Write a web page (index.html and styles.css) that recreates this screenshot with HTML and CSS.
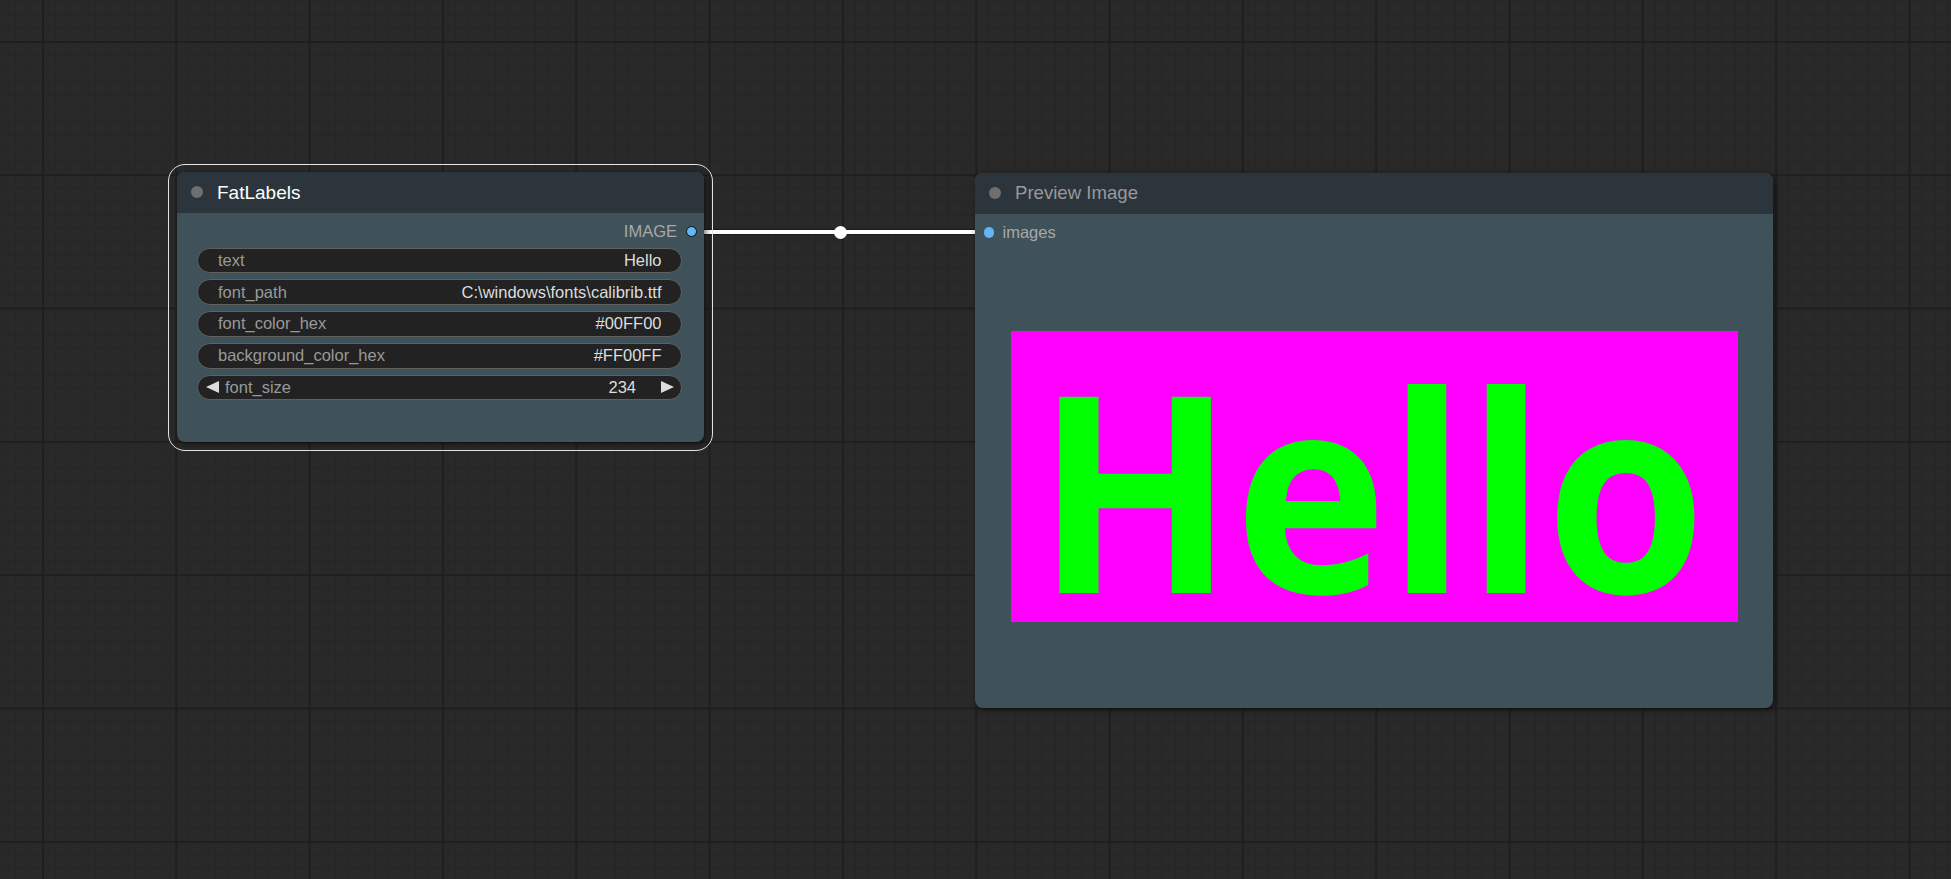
FILE: index.html
```html
<!DOCTYPE html>
<html lang="en">
<head>
<meta charset="utf-8">
<title>ComfyUI - FatLabels</title>
<link rel="stylesheet" href="styles.css">
</head>
<body>
<div class="canvas">
  <div class="link"></div>
  <div class="link-mid"></div>

  <div class="node node-fat selected">
    <div class="node-title">
      <span class="title-dot"></span>
      <span class="title-text title-active">FatLabels</span>
    </div>
    <div class="node-body">
      <div class="slot-row slot-out">
        <span class="slot-label">IMAGE</span>
        <span class="slot-dot slot-dot-out"></span>
      </div>
      <div class="widgets">
        <div class="widget">
          <span class="w-label">text</span>
          <span class="w-value">Hello</span>
        </div>
        <div class="widget">
          <span class="w-label">font_path</span>
          <span class="w-value">C:\windows\fonts\calibrib.ttf</span>
        </div>
        <div class="widget">
          <span class="w-label">font_color_hex</span>
          <span class="w-value">#00FF00</span>
        </div>
        <div class="widget">
          <span class="w-label">background_color_hex</span>
          <span class="w-value">#FF00FF</span>
        </div>
        <div class="widget widget-num">
          <svg class="arrow" width="13" height="12" viewBox="0 0 13 12"><polygon points="0,6 13,0 13,12" /></svg>
          <span class="w-label">font_size</span>
          <span class="w-value">234</span>
          <svg class="arrow" width="13" height="12" viewBox="0 0 13 12"><polygon points="13,6 0,0 0,12" /></svg>
        </div>
      </div>
    </div>
  </div>

  <div class="node node-preview">
    <div class="node-title">
      <span class="title-dot"></span>
      <span class="title-text">Preview Image</span>
    </div>
    <div class="node-body">
      <div class="slot-row slot-in">
        <span class="slot-dot"></span>
        <span class="slot-label">images</span>
      </div>
      <div class="preview-area">
        <svg class="preview-img" width="727" height="291" viewBox="0 0 727 291">
          <rect x="0" y="0" width="727" height="291" fill="#FF00FF"/>
          <text x="25" y="262" fill="#00FF00" font-family="'Open Sans', sans-serif" font-weight="700" font-size="275" textLength="670" lengthAdjust="spacingAndGlyphs">Hello</text>
        </svg>
      </div>
    </div>
  </div>
</div>
</body>
</html>
```

FILE: styles.css
```css
* { box-sizing: border-box; }

html, body {
  margin: 0;
  padding: 0;
  width: 1951px;
  height: 879px;
  overflow: hidden;
  font-family: "Liberation Sans", Arial, sans-serif;
}

.canvas {
  position: relative;
  width: 1951px;
  height: 879px;
  background-color: #292929;
  background-image:
    linear-gradient(to right, #1f1f1f 2px, transparent 2px),
    linear-gradient(to bottom, #1f1f1f 2px, transparent 2px),
    linear-gradient(to right, #252525 1px, transparent 1px),
    linear-gradient(to bottom, #252525 1px, transparent 1px);
  background-size:
    133.333px 133.333px,
    133.333px 133.333px,
    13.3333px 13.3333px,
    13.3333px 13.3333px;
  background-position:
    42px 41px,
    42px 41px,
    42px 41px,
    42px 41px;
}

/* link between nodes */
.link {
  position: absolute;
  left: 691px;
  top: 229.5px;
  width: 298px;
  height: 4.5px;
  background: #ffffff;
  box-shadow: 0 0 0 1px rgba(0, 0, 0, 0.35);
}

.link-mid {
  position: absolute;
  left: 833.5px;
  top: 225.5px;
  width: 13px;
  height: 13px;
  border-radius: 50%;
  background: #ffffff;
}

/* nodes */
.node {
  position: absolute;
  display: flex;
  flex-direction: column;
  background: #3f5259;
  border-radius: 8px;
  box-shadow: 2px 2px 6px rgba(0, 0, 0, 0.55);
}

.node-fat {
  left: 177px;
  top: 172px;
  width: 527px;
  height: 270px;
}

.node-preview {
  left: 975px;
  top: 173px;
  width: 798px;
  height: 535px;
}

.selected::before {
  content: "";
  position: absolute;
  left: -9px;
  top: -8px;
  right: -8.5px;
  bottom: -8.5px;
  border: 1.5px solid #e2e2e2;
  border-radius: 17px;
  pointer-events: none;
}

.node-title {
  height: 40.5px;
  flex: none;
  display: flex;
  align-items: center;
  gap: 14.5px;
  padding-left: 13.5px;
  background: #2b353b;
  border-radius: 8px 8px 0 0;
}

.title-dot {
  width: 12px;
  height: 12px;
  border-radius: 50%;
  background: #6f6f6f;
  flex: none;
}

.title-text {
  font-size: 18.6px;
  color: #999999;
  line-height: 1;
  white-space: nowrap;
}

.title-active {
  color: #ffffff;
  font-size: 19px;
}

.node-body {
  flex: 1;
  display: flex;
  flex-direction: column;
  padding-top: 6px;
}

.slot-row {
  height: 26px;
  display: flex;
  align-items: center;
  font-size: 16.5px;
  color: #a8a8a8;
}

.slot-out {
  justify-content: flex-end;
  gap: 8.5px;
  padding-right: 7.5px;
}

.slot-in {
  gap: 8.5px;
  padding-left: 8.5px;
}

.slot-dot {
  width: 10.5px;
  height: 10.5px;
  border-radius: 50%;
  background: #64b5f6;
  flex: none;
}

.slot-dot-out {
  width: 11px;
  height: 11px;
  border: 1px solid #101010;
}

.widgets {
  display: flex;
  flex-direction: column;
  gap: 6px;
  padding: 3px 22px 0 20px;
}

.widget {
  height: 25.75px;
  display: flex;
  align-items: center;
  justify-content: space-between;
  padding: 0 19.5px 0 20px;
  background: #222222;
  border: 1px solid #606060;
  border-radius: 13px;
  font-size: 16.5px;
  white-space: nowrap;
}

.w-label {
  color: #999999;
}

.w-value {
  color: #dddddd;
}

.widget-num {
  padding: 0 7.5px 0 7.5px;
  justify-content: flex-start;
}

.widget-num .w-label {
  margin-left: 6.5px;
}

.widget-num .w-value {
  margin-left: auto;
  margin-right: 24.5px;
}

.arrow {
  flex: none;
  fill: #dddddd;
}

.preview-area {
  flex: 1;
  display: flex;
  align-items: center;
  justify-content: center;
}

.preview-img {
  display: block;
  flex: none;
  overflow: visible;
}
```
